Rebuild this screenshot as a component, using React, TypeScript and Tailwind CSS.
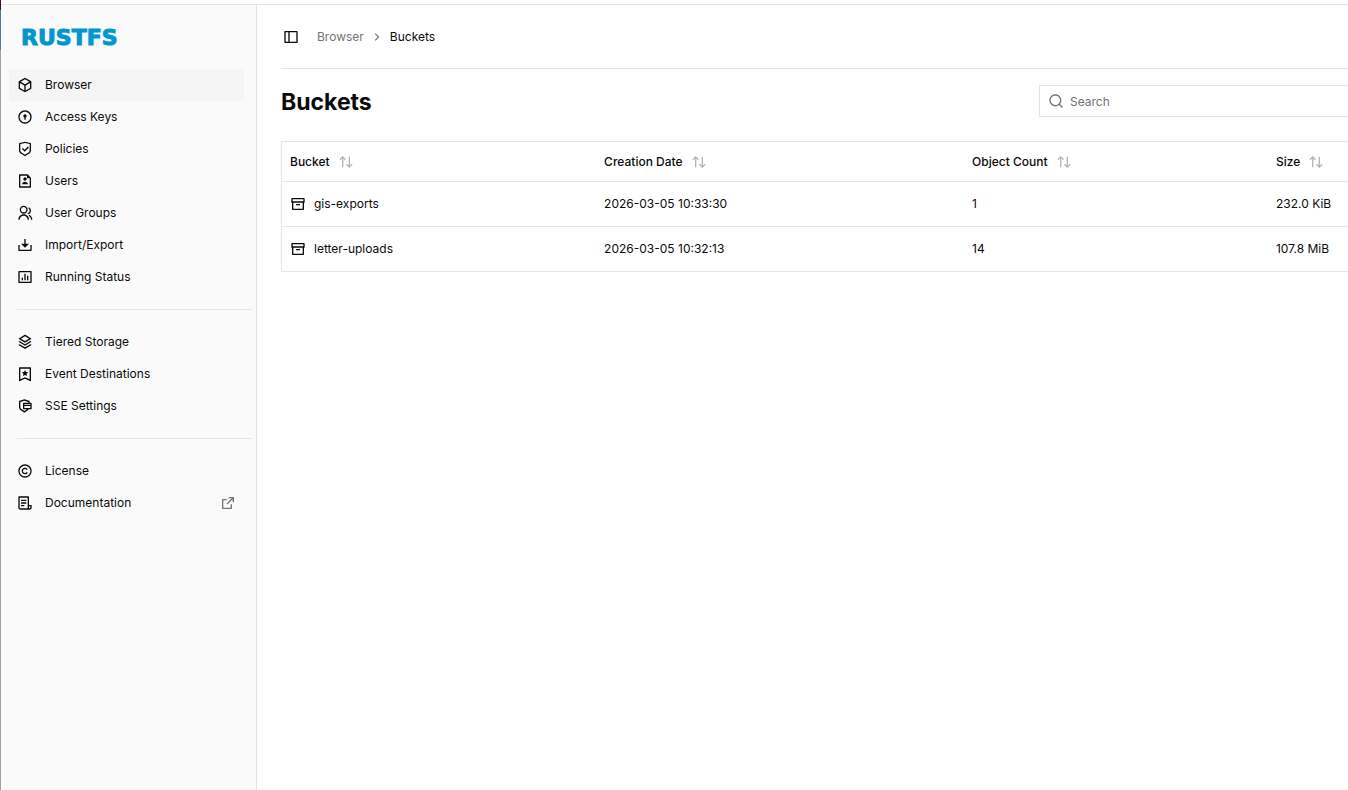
import React from 'react';
import type { IconType } from 'react-icons';
import {
  RiArchiveLine,
  RiArrowRightSLine,
  RiArrowUpDownLine,
  RiBarChartBoxLine,
  RiBookmark3Line,
  RiBox3Line,
  RiCopyrightLine,
  RiDoorLockLine,
  RiDownload2Line,
  RiExternalLinkLine,
  RiFileList3Line,
  RiFileUserLine,
  RiGroupLine,
  RiSearchLine,
  RiSecurePaymentLine,
  RiShieldCheckLine,
  RiSideBarLine,
  RiStackLine,
} from 'react-icons/ri';

interface NavItem {
  label: string;
  icon: IconType;
  active?: boolean;
  external?: boolean;
}

const navGroups: NavItem[][] = [
  [
    { label: 'Browser', icon: RiBox3Line, active: true },
    { label: 'Access Keys', icon: RiDoorLockLine },
    { label: 'Policies', icon: RiShieldCheckLine },
    { label: 'Users', icon: RiFileUserLine },
    { label: 'User Groups', icon: RiGroupLine },
    { label: 'Import/Export', icon: RiDownload2Line },
    { label: 'Running Status', icon: RiBarChartBoxLine },
  ],
  [
    { label: 'Tiered Storage', icon: RiStackLine },
    { label: 'Event Destinations', icon: RiBookmark3Line },
    { label: 'SSE Settings', icon: RiSecurePaymentLine },
  ],
  [
    { label: 'License', icon: RiCopyrightLine },
    { label: 'Documentation', icon: RiFileList3Line, external: true },
  ],
];

const columns = [
  { label: 'Bucket', width: 'w-[29.5%]' },
  { label: 'Creation Date', width: 'w-[34.5%]' },
  { label: 'Object Count', width: 'w-[28.5%]' },
  { label: 'Size', width: 'w-[7.5%]' },
];

const buckets = [
  { name: 'gis-exports', created: '2026-03-05 10:33:30', objects: 1, size: '232.0 KiB' },
  { name: 'letter-uploads', created: '2026-03-05 10:32:13', objects: 14, size: '107.8 MiB' },
];

const NavLink: React.FC<{ item: NavItem }> = ({ item }) => {
  const Icon = item.icon;
  return (
    <a
      href="#"
      aria-current={item.active ? 'page' : undefined}
      className={`flex h-8 items-center gap-3 px-2 ${item.active ? 'bg-neutral-100' : ''}`}
    >
      <Icon className="size-4 shrink-0" />
      <span className="flex-1">{item.label}</span>
      {item.external && <RiExternalLinkLine className="size-4 shrink-0 text-neutral-500" />}
    </a>
  );
};

const Sidebar: React.FC = () => (
  <aside className="w-64 shrink-0 border-r border-neutral-200 bg-neutral-50">
    <div className="flex h-16 items-center px-5 pt-0.5 font-['DejaVu_Sans',sans-serif] text-[22px] font-bold text-[#0196d0] [-webkit-text-stroke:1px_#0196d0]">
      RUSTFS
    </div>
    <nav className="pr-3 pl-2">
      {navGroups.map((group, i) => (
        <React.Fragment key={i}>
          {i > 0 && <hr className="my-4 -mr-2 ml-2 border-neutral-200" />}
          {group.map((item) => (
            <NavLink key={item.label} item={item} />
          ))}
        </React.Fragment>
      ))}
    </nav>
  </aside>
);

const BucketTable: React.FC = () => (
  <table className="w-full table-fixed border-collapse border-y border-l border-neutral-200 text-left whitespace-nowrap">
    <thead>
      <tr className="h-10 border-b border-neutral-200">
        {columns.map((column) => (
          <th key={column.label} scope="col" className={`px-2 font-medium ${column.width}`}>
            <button type="button" className="flex items-center gap-2">
              {column.label}
              <RiArrowUpDownLine className="size-4 text-neutral-950/30" />
            </button>
          </th>
        ))}
      </tr>
    </thead>
    <tbody>
      {buckets.map((bucket) => (
        <tr key={bucket.name} className="h-[45px] border-b border-neutral-200">
          <td className="px-2">
            <a href="#" className="flex items-center gap-2">
              <RiArchiveLine className="size-4" />
              {bucket.name}
            </a>
          </td>
          <td className="px-2">{bucket.created}</td>
          <td className="px-2">{bucket.objects}</td>
          <td className="px-2">{bucket.size}</td>
        </tr>
      ))}
    </tbody>
  </table>
);

export default function App() {
  return (
    <div className="flex min-h-screen bg-white font-[Inter,sans-serif] text-xs text-neutral-950">
      {/* Window edge */}
      <div className="flex w-px shrink-0 flex-col bg-neutral-400">
        <div className="h-2.5 bg-[#35112f]" />
        <div className="h-10 bg-[#4d7f8c]" />
      </div>

      <div className="flex min-w-0 flex-1 flex-col pt-1">
        <div className="flex flex-1 border-t border-neutral-200">
          <Sidebar />

          <main className="min-w-0 flex-1 pl-6">
            <header className="flex h-16 items-center border-b border-neutral-200">
              <button type="button" aria-label="Toggle sidebar" className="px-0.5">
                <RiSideBarLine className="size-4" />
              </button>
              <nav aria-label="Breadcrumb" className="ml-4 flex items-center gap-1.5">
                <a href="#" className="text-neutral-500">
                  Browser
                </a>
                <RiArrowRightSLine className="size-3.5 text-neutral-500" />
                <span aria-current="page">Buckets</span>
              </nav>
            </header>

            <div className="flex items-center justify-between py-4">
              <h1 className="pt-0.5 text-[23px] leading-[30px] font-bold">Buckets</h1>
              <label className="flex h-8 w-[309px] items-center gap-1.5 border-y border-l border-neutral-200 pl-2">
                <RiSearchLine className="size-4 text-neutral-500" />
                <input
                  type="text"
                  aria-label="Search"
                  placeholder="Search"
                  className="min-w-0 flex-1 pt-0.5 outline-none placeholder:text-neutral-500"
                />
              </label>
            </div>

            <div className="pt-2">
              <BucketTable />
            </div>
          </main>
        </div>
      </div>
    </div>
  );
}
